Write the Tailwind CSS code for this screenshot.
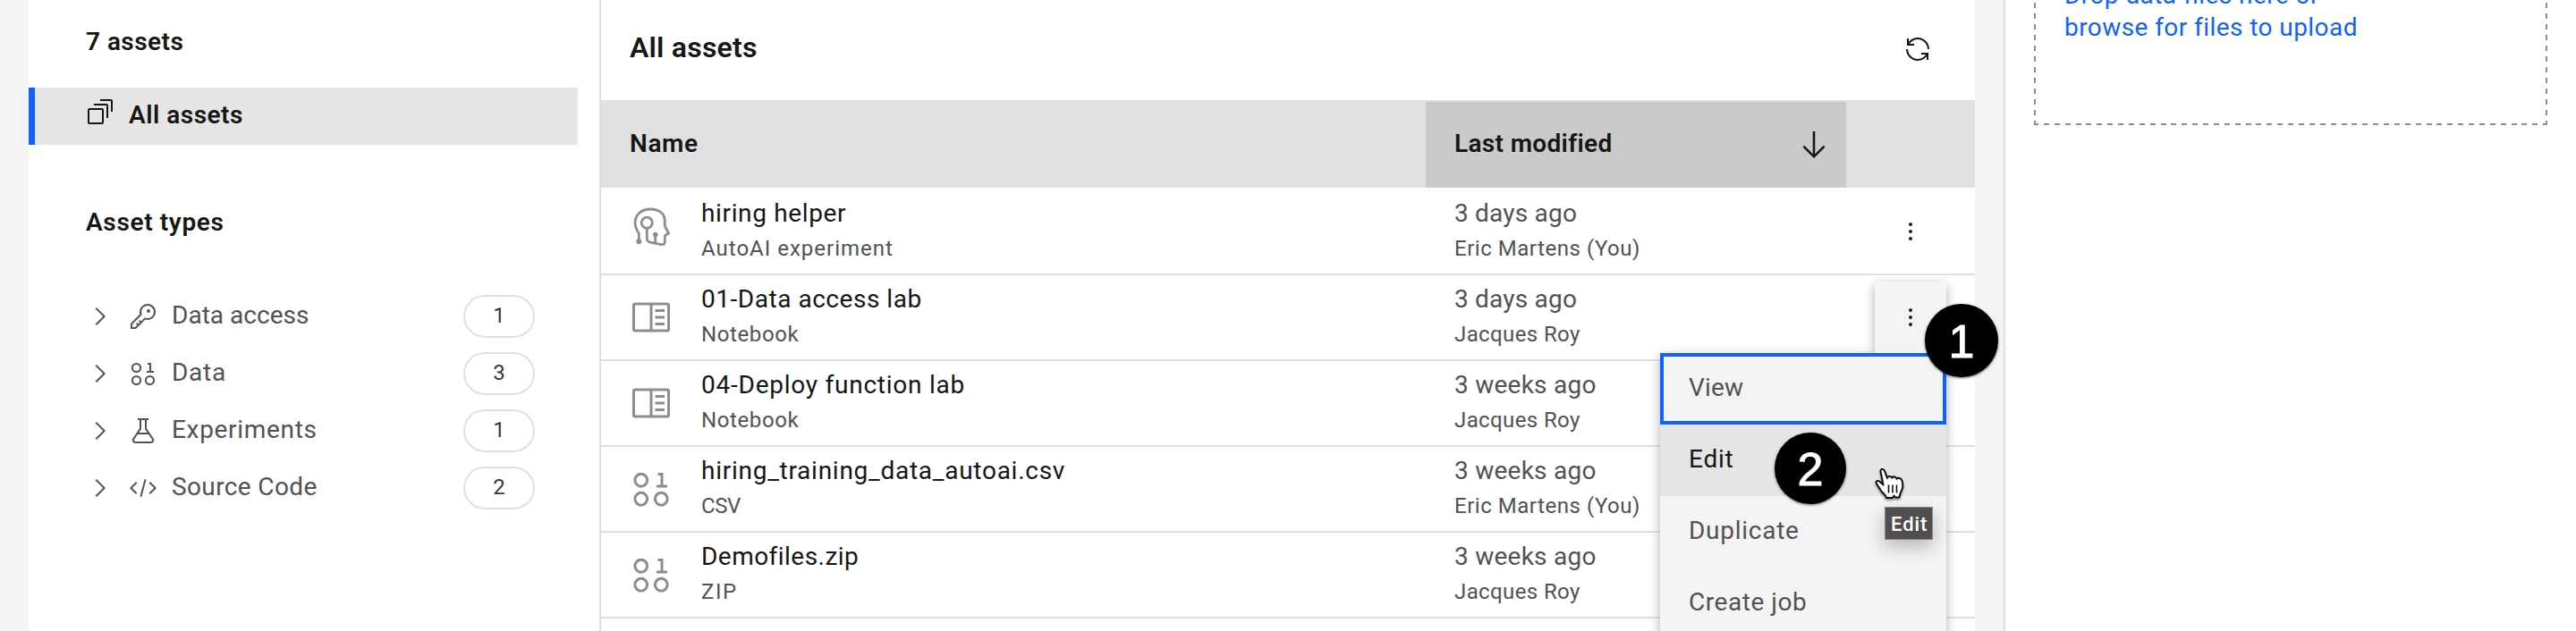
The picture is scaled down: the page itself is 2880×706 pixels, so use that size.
<!DOCTYPE html>
<html lang="en">
<head>
<meta charset="utf-8">
<title>Assets</title>
<script src="https://cdn.jsdelivr.net/npm/@tailwindcss/browser@4"></script>
</head>
<body class="bg-white">
<svg class="hidden">
  <symbol id="chevron" viewBox="0 0 32 32"><path d="M22 16 12 26 10.6 24.6 19.2 16 10.6 7.4 12 6Z"/></symbol>
  <symbol id="data" viewBox="0 0 32 32"><g fill="none" stroke="currentColor" stroke-width="2"><circle cx="8.5" cy="9.5" r="4.6"/><circle cx="8.5" cy="23.5" r="4.6"/><circle cx="23.5" cy="23.5" r="4.6"/></g><path d="M28 13V15H20V13H23V6H21V4H25V13Z"/></symbol>
  <symbol id="notebook" viewBox="0 0 32 32"><path d="M19 10h7v2h-7zM19 15h7v2h-7zM19 20h7v2h-7z"/><path d="M28,5H4A2,2,0,0,0,2,7V25a2,2,0,0,0,2,2H28a2,2,0,0,0,2-2V7A2,2,0,0,0,28,5ZM4,7H15V25H4ZM17,25V7H28V25Z"/></symbol>
  <symbol id="overflow" viewBox="0 0 32 32"><circle cx="16" cy="8" r="2"/><circle cx="16" cy="16" r="2"/><circle cx="16" cy="24" r="2"/></symbol>
</svg>
<div class="relative flex h-[706px] w-[2880px] overflow-hidden bg-white font-['Roboto',sans-serif] text-[28px] leading-[37px] text-[#161616]">
  <div class="w-8 bg-[#f4f4f4]"></div>

  <aside class="w-[638px] pt-7">
    <h2 class="ml-16 font-semibold tracking-[0.46px]">7 assets</h2>
    <div class="mt-[33px] mr-6 flex h-16 gap-4 border-l-[7px] border-[#0f62fe] bg-[#e5e5e5] pl-[57px]">
      <svg class="mt-[11px] size-8" viewBox="0 0 32 32" fill="none" stroke="currentColor" stroke-width="2"><rect x="3" y="13" width="16" height="16" rx="1"/><path d="M9 8H23a1 1 0 0 1 1 1V23M16 3H28a1 1 0 0 1 1 1V16"/></svg>
      <span class="mt-3 font-semibold tracking-[0.5px]">All assets</span>
    </div>
    <h2 class="mt-[68px] ml-16 font-semibold tracking-[0.65px]">Asset types</h2>
    <ul class="mt-[55px] text-[#525252]">
      <li class="flex h-16 gap-4 pt-2 pr-[72px] pl-16">
        <svg class="mt-2 size-8 fill-current"><use href="#chevron"/></svg>
        <svg class="mt-2 size-8 fill-current" viewBox="0 0 32 32"><path d="M21,2a8.9977,8.9977,0,0,0-8.6119,11.6118L2,24v6H8L18.3881,19.6118A9,9,0,1,0,21,2Zm0,16a7.0125,7.0125,0,0,1-2.0322-.3022L17.821,17.35l-.8472.8472-3.1811,3.1812L12.4141,20,11,21.4141l1.3787,1.3786-1.5859,1.586L9.4141,23,8,24.4141l1.3787,1.3786L7.1716,28H4V24.8284l9.8023-9.8023.8472-.8474-.3473-1.1467A7,7,0,1,1,21,18Z"/><circle cx="22" cy="10" r="2"/></svg>
        <span class="mt-1 tracking-[0.02px]">Data access</span>
        <span class="ml-auto h-12 w-20 rounded-full border-2 border-[#e0e0e0] pt-[5px] text-center text-[24px] leading-8 text-[#393939]">1</span>
      </li>
      <li class="flex h-16 gap-4 pt-2 pr-[72px] pl-16">
        <svg class="mt-2 size-8 fill-current"><use href="#chevron"/></svg>
        <svg class="mt-2 size-8 fill-current"><use href="#data"/></svg>
        <span class="mt-1 tracking-[0.74px]">Data</span>
        <span class="ml-auto h-12 w-20 rounded-full border-2 border-[#e0e0e0] pt-[5px] text-center text-[24px] leading-8 text-[#393939]">3</span>
      </li>
      <li class="flex h-16 gap-4 pt-2 pr-[72px] pl-16">
        <svg class="mt-2 size-8 fill-current"><use href="#chevron"/></svg>
        <svg class="mt-2 size-8 fill-current" viewBox="0 0 32 32"><path fill-rule="evenodd" d="M27.7,24.79 20,13.29V4h2V2H10V4h2v9.29l-7.7,11.5A3.35,3.35,0,0,0,7.09,30H24.91a3.35,3.35,0,0,0,2.79-5.21ZM14,13.9V4h4v9.9L20.75,18H11.25ZM24.91,28H7.09a1.37,1.37,0,0,1-1.13-2.1L9.9,20H22.1l3.94,5.9A1.37,1.37,0,0,1,24.91,28Z"/></svg>
        <span class="mt-1 tracking-[0.68px]">Experiments</span>
        <span class="ml-auto h-12 w-20 rounded-full border-2 border-[#e0e0e0] pt-[5px] text-center text-[24px] leading-8 text-[#393939]">1</span>
      </li>
      <li class="flex h-16 gap-4 pt-2 pr-[72px] pl-16">
        <svg class="mt-2 size-8 fill-current"><use href="#chevron"/></svg>
        <svg class="mt-2 size-8 fill-current" viewBox="0 0 32 32"><path d="M31 16 24 23 22.59 21.59 28.17 16 22.59 10.41 24 9ZM1 16 8 9 9.41 10.41 3.83 16 9.41 21.59 8 23Z"/><rect x="5.91" y="15" width="20.17" height="2" transform="rotate(-75 15.996 16)"/></svg>
        <span class="mt-1 tracking-[0.38px]">Source Code</span>
        <span class="ml-auto h-12 w-20 rounded-full border-2 border-[#e0e0e0] pt-[5px] text-center text-[24px] leading-8 text-[#393939]">2</span>
      </li>
    </ul>
  </aside>

  <main class="w-[1538px] border-l-2 border-[#e0e0e0]">
    <header class="flex h-28 justify-between pt-[33px] pr-12 pl-8">
      <h1 class="text-[32px] leading-10 font-semibold tracking-[0.22px]">All assets</h1>
      <svg class="mt-1.5 size-8 fill-current" viewBox="0 0 32 32"><path d="M12,10H6.78A11,11,0,0,1,27,16h2A13,13,0,0,0,6,7.68V4H4v8h8ZM20,22h5.22A11,11,0,0,1,5,16H3a13,13,0,0,0,23,8.32V28h2V20H20Z"/></svg>
    </header>
    <div class="grid h-[98px] grid-cols-[922px_470px_144px] border-t-2 border-[#e0e0e0] bg-[#e0e0e0] font-semibold">
      <div class="pt-7 pl-8 tracking-[0.61px]">Name</div>
      <div class="flex justify-between bg-[#cacaca] pt-7 pr-4 pl-8"><span class="tracking-[0.34px]">Last modified</span>
        <svg class="size-10 fill-current" viewBox="0 0 32 32"><path d="M24.59 16.59 17 24.17 17 4 15 4 15 24.17 7.41 16.59 6 18 16 28 26 18Z"/></svg></div>
    </div>

    <div class="grid h-[98px] grid-cols-[922px_470px_144px] border-b-2 border-[#e0e0e0] pt-2.5">
      <div class="flex gap-8 pl-8">
        <svg class="mt-[9px] size-12 text-[#8d8d8d]" viewBox="0 0 48 48" fill="none" stroke="currentColor" stroke-width="2.8" stroke-linejoin="round"><path d="M10.3 41V32.5C8.5 29 6 26 6 20.5C6 11 13 5 23 5C33 5 39.3 10 39.3 18V24L43.6 32L39.3 34.6V41C39.3 44 38.5 45 35.5 44.6L24 42.3C20.5 41.6 19.3 40.8 19.3 38V27M28.7 34V43"/><circle cx="19.3" cy="20.3" r="6.1"/><circle cx="10.3" cy="41.3" r="3" fill="currentColor" stroke="none"/><circle cx="28.7" cy="33.5" r="2.8" fill="currentColor" stroke="none"/></svg>
        <div><p class="tracking-[0.64px]">hiring helper</p><p class="mt-[5px] text-[24px] leading-8 tracking-[1px] text-[#525252]">AutoAI experiment</p></div>
      </div>
      <div class="pl-8 text-[#525252]"><p class="tracking-[0.21px]">3 days ago</p><p class="mt-[5px] text-[24px] leading-8 tracking-[0.53px]">Eric Martens (You)</p></div>
      <svg class="mt-[23px] ml-14 size-8 fill-[#161616]"><use href="#overflow"/></svg>
    </div>
    <div class="grid h-24 grid-cols-[922px_470px_144px] border-b-2 border-[#e0e0e0] pt-2">
      <div class="flex gap-8 pl-8">
        <svg class="mt-[15px] size-12 fill-[#8d8d8d]"><use href="#notebook"/></svg>
        <div><p class="tracking-[0.53px]">01-Data access lab</p><p class="mt-[5px] text-[24px] leading-8 tracking-[0.61px] text-[#525252]">Notebook</p></div>
      </div>
      <div class="pl-8 text-[#525252]"><p class="tracking-[0.21px]">3 days ago</p><p class="mt-[5px] text-[24px] leading-8 tracking-[0.39px]">Jacques Roy</p></div>
      <div class="relative">
        <div class="absolute -top-px left-8 h-[80px] w-20 bg-[#f4f4f4] shadow-[0_4px_12px_rgba(0,0,0,0.3)]"></div>
        <svg class="relative mt-[23px] ml-14 size-8 fill-[#161616]"><use href="#overflow"/></svg>
      </div>
    </div>
    <div class="grid h-24 grid-cols-[922px_470px_144px] border-b-2 border-[#e0e0e0] pt-2">
      <div class="flex gap-8 pl-8">
        <svg class="mt-[15px] size-12 fill-[#8d8d8d]"><use href="#notebook"/></svg>
        <div><p class="tracking-[0.76px]">04-Deploy function lab</p><p class="mt-[5px] text-[24px] leading-8 tracking-[0.61px] text-[#525252]">Notebook</p></div>
      </div>
      <div class="pl-8 text-[#525252]"><p class="tracking-[0.25px]">3 weeks ago</p><p class="mt-[5px] text-[24px] leading-8 tracking-[0.39px]">Jacques Roy</p></div>
    </div>
    <div class="grid h-24 grid-cols-[922px_470px_144px] border-b-2 border-[#e0e0e0] pt-2">
      <div class="flex gap-8 pl-8">
        <svg class="mt-[15px] size-12 fill-[#8d8d8d] text-[#8d8d8d]"><use href="#data"/></svg>
        <div><p class="tracking-[0.74px]">hiring_training_data_autoai.csv</p><p class="mt-[5px] text-[24px] leading-8 tracking-[-0.44px] text-[#525252]">CSV</p></div>
      </div>
      <div class="pl-8 text-[#525252]"><p class="tracking-[0.25px]">3 weeks ago</p><p class="mt-[5px] text-[24px] leading-8 tracking-[0.53px]">Eric Martens (You)</p></div>
    </div>
    <div class="grid h-24 grid-cols-[922px_470px_144px] border-b-2 border-[#e0e0e0] pt-2">
      <div class="flex gap-8 pl-8">
        <svg class="mt-[15px] size-12 fill-[#8d8d8d] text-[#8d8d8d]"><use href="#data"/></svg>
        <div><p class="tracking-[0.46px]">Demofiles.zip</p><p class="mt-[5px] text-[24px] leading-8 tracking-[1.55px] text-[#525252]">ZIP</p></div>
      </div>
      <div class="pl-8 text-[#525252]"><p class="tracking-[0.25px]">3 weeks ago</p><p class="mt-[5px] text-[24px] leading-8 tracking-[0.39px]">Jacques Roy</p></div>
    </div>
  </main>

  <div class="w-8 bg-[#f4f4f4]"></div>

  <aside class="flex-1 border-l-2 border-[#e0e0e0] pl-8">
    <!-- Drop zone with long dashes -->
    <div class="flex h-[140px] w-[574px] flex-col pl-[34px] tracking-[0.43px] text-[#0f62fe] [background:repeating-linear-gradient(180deg,transparent_0_3px,#8d8d8d_3px_9px,transparent_9px_12px)_left_top/2px_100%_no-repeat,repeating-linear-gradient(180deg,transparent_0_3px,#8d8d8d_3px_9px,transparent_9px_12px)_right_top/2px_100%_no-repeat,repeating-linear-gradient(90deg,#8d8d8d_0_5px,transparent_5px_10.88px,#8d8d8d_10.88px_11.88px)_left_bottom/100%_2px_no-repeat]">
      <p class="-mt-6">Drop data files here or</p>
      <p class="-mt-px">browse for files to upload</p>
    </div>
  </aside>

  <!-- Row action menu -->
  <div class="absolute top-[395px] left-[1856px] h-[320px] w-80 bg-[#f4f4f4] text-[#525252] shadow-[0_4px_12px_rgba(0,0,0,0.3)]">
    <div class="h-20 border-4 border-[#0f62fe] pt-4 pl-7 tracking-[0.17px]">View</div>
    <div class="h-20 bg-[#e5e5e5] pt-5 pl-8 tracking-[0.75px] text-[#161616]">Edit</div>
    <div class="h-20 pt-5 pl-8 tracking-[0.73px]">Duplicate</div>
    <div class="h-20 pt-5 pl-8 tracking-[0.54px]">Create job</div>
  </div>
  <div class="absolute top-[389px] left-[2096px] h-1.5 w-20 bg-[#f4f4f4]"></div>

  <!-- Step markers -->
  <div class="absolute top-[340px] left-[2152px] flex size-[82px] items-center justify-center rounded-full bg-black pt-0.5 font-['Liberation_Sans',sans-serif] text-[52px] leading-none text-white shadow-[0_1px_3px_rgba(0,0,0,0.6)] [-webkit-text-stroke:1px_white]">1</div>
  <div class="absolute top-[484px] left-[1984px] flex size-20 items-center justify-center rounded-full bg-black pt-0.5 font-['Liberation_Sans',sans-serif] text-[52px] leading-none text-white shadow-[0_1px_3px_rgba(0,0,0,0.6)] [-webkit-text-stroke:1px_white]">2</div>

  <!-- Tooltip and pointer -->
  <div class="absolute top-[567px] left-[2107px] h-[37px] w-[54px] border border-[#8a8788] bg-[#524d4e] pt-[5px] pl-1.5 text-[22px] leading-[27px] font-medium tracking-[0.92px] text-white shadow-[0_8px_20px_rgba(0,0,0,0.25)]">Edit</div>
  <svg class="absolute top-[522px] left-[2094px] h-[42px] w-9 drop-shadow-[0_2px_1px_rgba(0,0,0,0.4)]" viewBox="0 0 36 42" fill="white" stroke="#111" stroke-width="2" stroke-linejoin="round" stroke-linecap="round"><path d="M8.5 5.5C8 2.5 12 2 13 4.800L16 13C16 10.500 20.500 10 21.300 12.800C22 10.600 26 11 26.500 13.800C28 12 31.500 13 32.500 15.800C33.500 19 33.500 23 32.500 25.500C31.500 28 30 30 29.500 34.500H25L23.500 32.500L22 35H15C14 31 10.500 29.500 9 27L3.800 18.800C2.700 16.800 5 15 7.300 16.500L11.500 20.500Z"/><path fill="none" stroke-width="1.6" d="M17.500 21V29M22 21V29M26.500 21V29"/></svg>
</div>
</body>
</html>
